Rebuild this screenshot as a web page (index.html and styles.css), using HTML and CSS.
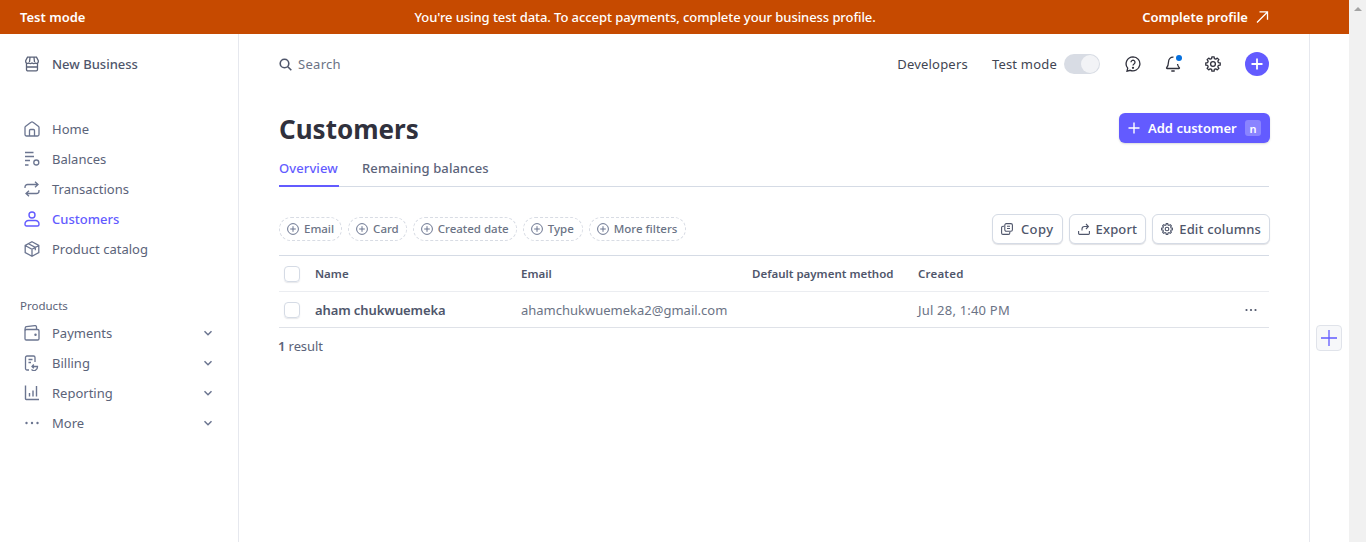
FILE: index.html
```html
<!DOCTYPE html>
<html lang="en">
<head>
    <meta charset="UTF-8">
    <meta name="viewport" content="width=device-width, initial-scale=1.0">
    <title>Customers</title>
    <link rel="stylesheet" href="styles.css">
</head>
<body>
<div class="window">
    <div class="page">
        <!-- Test mode banner -->
        <div class="banner">
            <span class="banner-label">Test mode</span>
            <span class="banner-text">You're using test data. To accept payments, complete your business profile.</span>
            <span class="banner-link">Complete profile
                <svg width="14" height="14" viewBox="0 0 14 14" fill="none" stroke="#fff" stroke-width="1.3"><path d="M2 12.5 12.5 2M4.5 1.8h8v8"/></svg>
            </span>
        </div>

        <div class="layout">
            <!-- Sidebar -->
            <nav class="sidebar">
                <div class="account">
                    <svg class="nav-icon" viewBox="0 0 16 16" fill="none" stroke="#5b6379" stroke-width="1.3"><path d="M3.5 1.2h9l1.8 3.4v1.2a1.9 1.9 0 0 1-3.1 1.2 2.6 2.6 0 0 1-3.2 0 2.6 2.6 0 0 1-3.2 0 1.9 1.9 0 0 1-3.1-1.2V4.600zM2.500 7.500v6a1.300 1.300 0 0 0 1.300 1.300h8.400a1.300 1.300 0 0 0 1.300-1.300v-6M2.500 11h11M6 1.500 5.500 6M10 1.500 10.500 6"/></svg>
                    <span>New Business</span>
                </div>

                <div class="nav-group">
                    <a class="nav-item">
                        <svg class="nav-icon" viewBox="0 0 16 16" fill="none" stroke="#6b7590" stroke-width="1.3" stroke-linejoin="round"><path d="M1 6.500c0-.6.3-1 .7-1.300L7 1.200a1.600 1.600 0 0 1 2 0l5.300 4c.4.300.7.700.7 1.300v7a1.500 1.500 0 0 1-1.500 1.500h-11A1.500 1.500 0 0 1 1 13.500zM5.500 15V9.500a1 1 0 0 1 1-1h3a1 1 0 0 1 1 1V15"/></svg>
                        Home
                    </a>
                    <a class="nav-item">
                        <svg class="nav-icon" viewBox="0 0 16 16" fill="none" stroke="#6b7590" stroke-width="1.3"><path d="M1 1.500h8.500M1 5.500h9M1 9.500h5M1 14h3.500"/><circle cx="12.300" cy="11.500" r="2.500"/></svg>
                        Balances
                    </a>
                    <a class="nav-item">
                        <svg class="nav-icon" viewBox="0 0 16 16" fill="none" stroke="#6b7590" stroke-width="1.3"><path d="M1 7V6a2.500 2.500 0 0 1 2.500-2.500H14M11 .8l3 2.700-3 2.700M15 9v1a2.500 2.500 0 0 1-2.500 2.500H2M5 9.800l-3 2.700 3 2.700"/></svg>
                        Transactions
                    </a>
                    <a class="nav-item active">
                        <svg class="nav-icon" viewBox="0 0 16 16" fill="none" stroke="#635bff" stroke-width="1.400"><circle cx="8" cy="4" r="3"/><path d="M1 13a3.500 3.500 0 0 1 3.500-3.500h7A3.500 3.500 0 0 1 15 13v.5a1.500 1.500 0 0 1-1.500 1.500h-11A1.500 1.500 0 0 1 1 13.500z"/></svg>
                        Customers
                    </a>
                    <a class="nav-item">
                        <svg class="nav-icon" viewBox="0 0 16 16" fill="none" stroke="#6b7590" stroke-width="1.3"><path d="M8 .8 14.800 4.500v7L8 15.200 1.200 11.500v-7zM1.200 4.500 8 8.200l6.800-3.700M8 8.200v7M4.500 2.700l6.800 3.700v2.800"/></svg>
                        Product catalog
                    </a>
                </div>

                <div class="nav-heading">Products</div>
                <div class="nav-group">
                    <a class="nav-item">
                        <svg class="nav-icon" viewBox="0 0 16 16" fill="none" stroke="#6b7590" stroke-width="1.3"><path d="M1 5.500 1.200 3a1.500 1.500 0 0 1 1.200-1.300L11 .6a1.300 1.300 0 0 1 1.500 1.300v2.600"/><rect x="1" y="4.500" width="14" height="10.500" rx="1.300"/><circle cx="11.500" cy="9.800" r=".6" fill="#6b7590"/></svg>
                        Payments
                        <svg class="chevron" viewBox="0 0 10 10" fill="none" stroke="#6b7590" stroke-width="1.500"><path d="M1.500 3.300 5 6.800l3.500-3.500"/></svg>
                    </a>
                    <a class="nav-item">
                        <svg class="nav-icon" viewBox="0 0 16 16" fill="none" stroke="#6b7590" stroke-width="1.3"><path d="M5 15H3a1.500 1.500 0 0 1-1.500-1.500v-11A1.500 1.500 0 0 1 3 1h6.500A1.500 1.500 0 0 1 11 2.500V7M4.500 4.500h4M4.500 7.500h2.500M8 11.500h5.500a2 2 0 0 1 0 .5 3.500 3.500 0 0 1-6 2.500M9.800 9.500 8 11.500l1.800 1.800"/></svg>
                        Billing
                        <svg class="chevron" viewBox="0 0 10 10" fill="none" stroke="#6b7590" stroke-width="1.500"><path d="M1.500 3.300 5 6.800l3.500-3.500"/></svg>
                    </a>
                    <a class="nav-item">
                        <svg class="nav-icon" viewBox="0 0 16 16" fill="none" stroke="#6b7590" stroke-width="1.400"><path d="M1.500 .5v13.300a.7.7 0 0 0 .7.700H15M5.500 8v3.500M9 5.500v6M12.500 1v10.500"/></svg>
                        Reporting
                        <svg class="chevron" viewBox="0 0 10 10" fill="none" stroke="#6b7590" stroke-width="1.500"><path d="M1.500 3.300 5 6.800l3.500-3.500"/></svg>
                    </a>
                    <a class="nav-item">
                        <svg class="nav-icon" viewBox="0 0 16 16" fill="#6b7590"><circle cx="2.500" cy="8" r="1.200"/><circle cx="8" cy="8" r="1.200"/><circle cx="13.500" cy="8" r="1.200"/></svg>
                        More
                        <svg class="chevron" viewBox="0 0 10 10" fill="none" stroke="#6b7590" stroke-width="1.500"><path d="M1.500 3.300 5 6.800l3.500-3.500"/></svg>
                    </a>
                </div>
            </nav>

            <!-- Main content -->
            <main class="main">
                <div class="topbar">
                    <div class="search">
                        <svg width="13" height="13" viewBox="0 0 13 13" fill="none" stroke="#4f566b" stroke-width="1.600"><circle cx="5.500" cy="5.500" r="4.300"/><path d="m8.800 8.800 3.500 3.500"/></svg>
                        <span>Search</span>
                    </div>
                    <div class="topbar-right">
                        <span class="top-link dev-link">Developers</span>
                        <span class="top-link">Test mode</span>
                        <span class="toggle"><span class="knob"></span></span>
                        <svg class="top-icon help" viewBox="0 0 16 16" fill="none" stroke="#30313d" stroke-width="1.300"><path d="M8 .8a7 7 0 1 1-2.700 13.500L2 15.200l.7-3A7 7 0 0 1 8 .8z"/><path d="M6 6.200a2 2 0 1 1 3 1.800c-.7.400-1 .8-1 1.500"/><circle cx="8" cy="11.800" r=".5" fill="#30313d"/></svg>
                        <span class="bell">
                            <svg class="top-icon" viewBox="0 0 16 16" fill="none" stroke="#30313d" stroke-width="1.300" stroke-linejoin="round"><path d="M8.500 1.200C5.500 1 3.600 3 3.500 6c-.1 3-.8 4.800-2 6 0 .4.200.5.500.5h12c.3 0 .5-.1.500-.5-1.200-1.200-1.800-2.500-2-4M6.300 15h3.400"/></svg>
                            <span class="dot"></span>
                        </span>
                        <svg class="top-icon gear" viewBox="0 0 16 16" fill="none" stroke="#30313d" stroke-width="1.300" stroke-linejoin="round"><circle cx="8" cy="8" r="2.400"/><path d="M6.650 2.570 6.860.79h2.280l.21 1.780 1.530.63 1.410-1.110 1.620 1.620-1.110 1.410.63 1.530 1.780.21v2.280l-1.780.21-.63 1.530 1.110 1.410-1.620 1.620-1.410-1.110-1.530.63-.21 1.780H6.860l-.21-1.780-1.530-.63-1.410 1.110-1.620-1.620 1.110-1.410-.63-1.530-1.780-.21V6.860l1.780-.21.63-1.530-1.110-1.410 1.620-1.620 1.410 1.110z"/></svg>
                        <span class="round-plus">
                            <svg width="12" height="12" viewBox="0 0 12 12" stroke="#fff" stroke-width="1.800"><path d="M6 .5v11M.5 6h11"/></svg>
                        </span>
                    </div>
                </div>

                <div class="title-row">
                    <h1>Customers</h1>
                    <button class="primary-btn">
                        <svg width="12" height="12" viewBox="0 0 12 12" stroke="#fff" stroke-width="1.400"><path d="M6 .5v11M.5 6h11"/></svg>
                        Add customer
                        <span class="key">n</span>
                    </button>
                </div>

                <div class="tabs">
                    <span class="tab active">Overview</span>
                    <span class="tab">Remaining balances</span>
                </div>

                <div class="toolbar">
                    <div class="filters">
                        <span class="filter"><svg class="plus-ring" viewBox="0 0 12 12" fill="none" stroke="#6b7590"><circle cx="6" cy="6" r="5.400"/><path d="M6 3.200v5.600M3.200 6h5.600"/></svg>Email</span>
                        <span class="filter"><svg class="plus-ring" viewBox="0 0 12 12" fill="none" stroke="#6b7590"><circle cx="6" cy="6" r="5.400"/><path d="M6 3.200v5.600M3.200 6h5.600"/></svg>Card</span>
                        <span class="filter"><svg class="plus-ring" viewBox="0 0 12 12" fill="none" stroke="#6b7590"><circle cx="6" cy="6" r="5.400"/><path d="M6 3.200v5.600M3.200 6h5.600"/></svg>Created date</span>
                        <span class="filter wide"><svg class="plus-ring" viewBox="0 0 12 12" fill="none" stroke="#6b7590"><circle cx="6" cy="6" r="5.400"/><path d="M6 3.200v5.600M3.200 6h5.600"/></svg>Type</span>
                        <span class="filter wide"><svg class="plus-ring" viewBox="0 0 12 12" fill="none" stroke="#6b7590"><circle cx="6" cy="6" r="5.400"/><path d="M6 3.200v5.600M3.200 6h5.600"/></svg>More filters</span>
                    </div>
                    <div class="actions">
                        <button class="ghost-btn copy-btn">
                            <svg width="12" height="12" viewBox="0 0 12 12" fill="none" stroke="#4f566b" stroke-width="1.100"><rect x="3.800" y=".6" width="7.600" height="7.600" rx="1.500"/><path d="M3 3.200H2A1.400 1.400 0 0 0 .6 4.600V10A1.400 1.400 0 0 0 2 11.400h5.400A1.400 1.400 0 0 0 8.800 10V9M6 3.300h3M6 5.500h3"/></svg>
                            Copy
                        </button>
                        <button class="ghost-btn">
                            <svg width="12" height="12" viewBox="0 0 12 12" fill="none" stroke="#4f566b" stroke-width="1.100"><path d="M.6 8v2.500a.9.900 0 0 0 .9.900h9a.9.900 0 0 0 .9-.9V8M4 7.500V6a2.500 2.500 0 0 1 2.500-2.500H10M8 1l2.400 2.500L8 6"/></svg>
                            Export
                        </button>
                        <button class="ghost-btn">
                            <svg width="12" height="12" viewBox="0 0 16 16" fill="none" stroke="#4f566b" stroke-width="1.500" stroke-linejoin="round"><circle cx="8" cy="8" r="2.400"/><path d="M6.650 2.570 6.860.79h2.280l.21 1.780 1.530.63 1.410-1.110 1.620 1.620-1.110 1.410.63 1.530 1.780.21v2.280l-1.780.21-.63 1.530 1.110 1.410-1.620 1.620-1.410-1.110-1.530.63-.21 1.780H6.860l-.21-1.780-1.530-.63-1.410 1.110-1.620-1.620 1.110-1.410-.63-1.530-1.780-.21V6.860l1.780-.21.63-1.530-1.110-1.410 1.620-1.620 1.410 1.110z"/></svg>
                            Edit columns
                        </button>
                    </div>
                </div>

                <div class="table">
                    <div class="row head">
                        <span class="check"></span>
                        <span class="col-name">Name</span>
                        <span class="col-email">Email</span>
                        <span class="col-pay">Default payment method</span>
                        <span class="col-created">Created</span>
                    </div>
                    <div class="row">
                        <span class="check"></span>
                        <span class="col-name strong">aham chukwuemeka</span>
                        <span class="col-email">ahamchukwuemeka2@gmail.com</span>
                        <span class="col-pay"></span>
                        <span class="col-created">Jul 28, 1:40 PM</span>
                        <svg class="row-menu" width="12" height="12" viewBox="0 0 12 12" fill="#4f566b"><circle cx="1.500" cy="6" r="1.100"/><circle cx="6" cy="6" r="1.100"/><circle cx="10.500" cy="6" r="1.100"/></svg>
                    </div>
                </div>
                <div class="result"><b>1</b> result</div>
            </main>

            <!-- Right rail -->
            <aside class="rail">
                <span class="rail-btn">
                    <svg width="16" height="16" viewBox="0 0 16 16" stroke="#635bff" stroke-width="1.300"><path d="M8 0v16M0 8h16"/></svg>
                </span>
            </aside>
        </div>
    </div>

    <div class="scrollbar"><span class="scroll-up"></span></div>
</div>
</body>
</html>
```

FILE: styles.css
```css
* {
    box-sizing: border-box;
}

html, body {
    height: 100%;
}

body {
    margin: 0;
    overflow: hidden;
    background-color: #fff;
    font-family: "Noto Sans", "Open Sans", sans-serif;
    font-size: 13px;
    color: #4f566b;
}

svg {
    flex-shrink: 0;
    display: block;
}

.window {
    display: flex;
    height: 542px;
}

.page {
    flex: 1;
    min-width: 0;
    display: flex;
    flex-direction: column;
}

.scrollbar {
    width: 17px;
    background-color: #f1f1f1;
    display: flex;
    justify-content: center;
    padding-top: 7px;
}

.scroll-up {
    width: 0;
    height: 0;
    border-left: 4px solid transparent;
    border-right: 4px solid transparent;
    border-bottom: 4px solid #a3a3a3;
}

/* Banner */
.banner {
    height: 34px;
    flex-shrink: 0;
    background-color: #c64a00;
    color: #fff;
    display: flex;
    align-items: center;
    justify-content: space-between;
    padding: 0 80px 0 20px;
    font-size: 13px;
}

.banner-label {
    font-weight: 600;
    width: 150px;
}

.banner-text {
    font-weight: 500;
    margin-right: 22px;
    letter-spacing: -0.07px;
}

.banner-link {
    display: flex;
    align-items: center;
    gap: 7px;
    font-weight: 600;
}

.layout {
    flex: 1;
    display: flex;
    min-height: 0;
}

/* Sidebar */
.sidebar {
    width: 239px;
    flex-shrink: 0;
    border-right: 1px solid #e6e8ee;
    padding: 20px 0 0 24px;
}

.account {
    height: 20px;
    display: flex;
    align-items: center;
    gap: 12px;
    font-weight: 500;
    color: #4f566b;
}

.nav-icon {
    width: 16px;
    height: 16px;
}

.nav-group {
    display: flex;
    flex-direction: column;
}

.account + .nav-group {
    margin-top: 40px;
}

.nav-item {
    height: 30px;
    display: flex;
    align-items: center;
    gap: 12px;
    padding-right: 25px;
    color: #5b6379;
}

.nav-item.active {
    color: #635bff;
    font-weight: 500;
}

.chevron {
    width: 10px;
    height: 10px;
    margin-left: auto;
}

.nav-heading {
    margin: 34px 0 0 -4px;
    height: 20px;
    font-size: 11.500px;
    line-height: 16px;
    color: #5b6379;
}

/* Main */
.main {
    flex: 1;
    min-width: 0;
    padding: 0 40px;
}

.topbar {
    height: 60px;
    display: flex;
    align-items: center;
    justify-content: space-between;
}

.search {
    display: flex;
    align-items: center;
    gap: 6px;
    color: #6b7385;
    letter-spacing: 0.3px;
}

.topbar-right {
    display: flex;
    align-items: center;
}

.top-link {
    color: #414552;
    letter-spacing: 0.2px;
}

.dev-link {
    margin-right: 24px;
}

.toggle {
    width: 36px;
    height: 20px;
    margin-left: 7px;
    border-radius: 10px;
    background-color: #d8dce4;
    display: flex;
    justify-content: flex-end;
    align-items: center;
    padding-right: 1px;
}

.knob {
    width: 18px;
    height: 18px;
    border-radius: 50%;
    background-color: #f2f3f6;
}

.top-icon {
    width: 16px;
    height: 16px;
}

.help {
    margin-left: 25px;
}

.bell {
    position: relative;
    margin-left: 24px;
}

.dot {
    position: absolute;
    top: -1px;
    right: -1px;
    width: 6px;
    height: 6px;
    border-radius: 50%;
    background-color: #0570de;
}

.gear {
    margin-left: 24px;
}

.round-plus {
    width: 24px;
    height: 24px;
    margin-left: 24px;
    border-radius: 50%;
    background-color: #635bff;
    display: flex;
    align-items: center;
    justify-content: center;
}

.title-row {
    height: 30px;
    margin-top: 19px;
    display: flex;
    align-items: center;
    justify-content: space-between;
}

h1 {
    margin: 0;
    padding-top: 2px;
    font-size: 26px;
    font-weight: 700;
    color: #30313d;
    line-height: 32px;
}

.primary-btn {
    height: 30px;
    width: 151px;
    margin-right: -1px;
    border: none;
    border-radius: 6px;
    background-color: #635bff;
    color: #fff;
    font: 600 13px "Noto Sans", sans-serif;
    display: flex;
    align-items: center;
    padding: 0 4px 0 9px;
    gap: 8px;
    box-shadow: 0 1px 2px rgba(60, 66, 87, 0.2);
}

.key {
    margin-left: auto;
    width: 16px;
    height: 16px;
    margin-right: 5px;
    border-radius: 3px;
    background-color: #8a84ff;
    font-size: 11px;
    line-height: 17px;
    text-align: center;
}

.tabs {
    margin-top: 9px;
    height: 35px;
    display: flex;
    gap: 23px;
    border-bottom: 1px solid #d5dbe5;
    letter-spacing: 0.1px;
}

.tab {
    height: 35px;
    padding-top: 7px;
    font-weight: 500;
    color: #5b6379;
}

.tab.active {
    width: 60px;
    color: #635bff;
    border-bottom: 2px solid #635bff;
}

.toolbar {
    margin-top: 26px;
    height: 31px;
    display: flex;
    align-items: center;
    justify-content: space-between;
}

.filters {
    display: flex;
    gap: 6px;
}

.filter {
    height: 24px;
    padding: 0 7px;
    display: flex;
    align-items: center;
    gap: 5px;
    border: 1px dashed #d8dce4;
    border-radius: 12px;
    font-size: 11.500px;
    font-weight: 500;
    color: #6b7385;
}

.filter.wide {
    padding-right: 8px;
}

.plus-ring {
    width: 12px;
    height: 12px;
}

.actions {
    display: flex;
    gap: 6px;
    margin-right: -1px;
}

.ghost-btn {
    height: 30px;
    padding: 0 8px;
    display: flex;
    align-items: center;
    gap: 6px;
    border: 1px solid #d5dbe5;
    border-radius: 6px;
    background-color: #fff;
    box-shadow: 0 1px 1px rgba(60, 66, 87, 0.16);
    color: #4f566b;
    font: 500 13px "Noto Sans", sans-serif;
    letter-spacing: 0.15px;
}

.copy-btn {
    gap: 8px;
    letter-spacing: 0.45px;
}

/* Table */
.table {
    margin-top: 11px;
    border-top: 1px solid #d5dbe5;
}

.row {
    height: 36px;
    display: flex;
    align-items: center;
    border-bottom: 1px solid #ebedf1;
    padding-left: 5px;
    position: relative;
    color: #6b7385;
}

.row:last-child {
    border-bottom-color: #dfe2e8;
}

.row.head {
    height: 36px;
    font-size: 11.500px;
    font-weight: 600;
    color: #4f566b;
}

.check {
    width: 16px;
    height: 16px;
    flex-shrink: 0;
    border: 1px solid #d5dbe5;
    border-radius: 4px;
    box-shadow: 0 1px 1px rgba(60, 66, 87, 0.12);
}

.col-name {
    width: 206px;
    margin-left: 15px;
}

.strong {
    font-weight: 600;
    color: #4f566b;
    letter-spacing: -0.1px;
}

.col-email {
    width: 231px;
}

.col-pay {
    width: 166px;
}

.col-created {
    letter-spacing: 0.2px;
}

.row-menu {
    position: absolute;
    right: 12px;
    top: 12px;
}

.result {
    margin-top: 9px;
    margin-left: -1px;
    line-height: 18px;
    color: #5b6379;
    letter-spacing: -0.1px;
}

.result b {
    font-weight: 600;
}

/* Right rail */
.rail {
    width: 40px;
    flex-shrink: 0;
    border-left: 1px solid #e6e8ee;
    padding: 291px 0 0 6px;
}

.rail-btn {
    width: 26px;
    height: 26px;
    display: flex;
    align-items: center;
    justify-content: center;
    border: 1px solid #e0e3ea;
    border-radius: 4px;
    background-color: #f7f8fa;
}
```
